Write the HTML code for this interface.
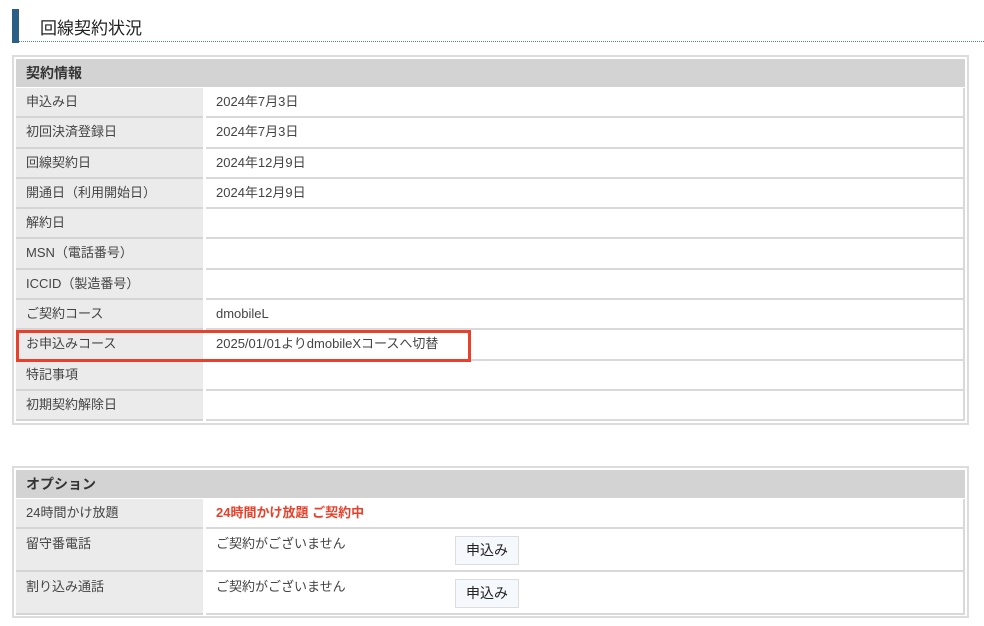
<!DOCTYPE html>
<html><head><meta charset="utf-8"><style>
*{margin:0;padding:0;box-sizing:border-box}
body{width:984px;height:626px;background:#fff;font-family:"Liberation Sans","Noto Sans CJK JP",sans-serif;color:#444;position:relative;overflow:hidden}
.bar{position:absolute;left:12px;top:9px;width:7px;height:34px;background:#2b5f86}
.title{position:absolute;left:40px;top:14px;font-size:17px;color:#222}
.dots{position:absolute;left:19px;top:41px;width:965px;border-top:1px dotted #5a7fa0}
.box{position:absolute;left:12px;width:957px;border:2px solid #dcdcdc;padding:2px}
.hd{height:28px;background:#d3d3d3;font-weight:bold;font-size:14px;line-height:28px;padding-left:10px;color:#333;margin-bottom:1px}
.row{display:flex;font-size:13px}
.l{width:187px;background:#ebebeb;border-bottom:2px solid #d4d4d4;padding-left:10px;margin-right:3px}
.v{flex:1;border-bottom:2px solid #d9d9d9;border-right:2px solid #d9d9d9;padding-left:10px}
.r1 .l,.r1 .v{height:30.3px;line-height:28.5px}
.red{color:#e8402a;font-weight:bold}
.btn{position:absolute;left:455px;width:64px;height:29px;background:#f5f8fc;border:1px solid #ddd;font-size:14px;line-height:27px;text-align:center;color:#222}
.hl{position:absolute;left:16px;top:330px;width:455px;height:32px;border:3px solid #e8402a}
</style></head><body>
<div class="bar"></div><div class="title">回線契約状況</div><div class="dots"></div>
<div class="box" style="top:55px;height:370px">
<div class="hd">契約情報</div>
<div class="row r1"><div class="l">申込み日</div><div class="v">2024年7月3日</div></div>
<div class="row r1"><div class="l">初回決済登録日</div><div class="v">2024年7月3日</div></div>
<div class="row r1"><div class="l">回線契約日</div><div class="v">2024年12月9日</div></div>
<div class="row r1"><div class="l">開通日（利用開始日）</div><div class="v">2024年12月9日</div></div>
<div class="row r1"><div class="l">解約日</div><div class="v"></div></div>
<div class="row r1"><div class="l">MSN（電話番号）</div><div class="v"></div></div>
<div class="row r1"><div class="l">ICCID（製造番号）</div><div class="v"></div></div>
<div class="row r1"><div class="l">ご契約コース</div><div class="v">dmobileL</div></div>
<div class="row r1"><div class="l">お申込みコース</div><div class="v">2025/01/01よりdmobileXコースへ切替</div></div>
<div class="row r1"><div class="l">特記事項</div><div class="v"></div></div>
<div class="row r1"><div class="l">初期契約解除日</div><div class="v"></div></div>
</div>
<div class="hl"></div>
<div class="box" style="top:466px;height:152px">
<div class="hd">オプション</div>
<div class="row r1"><div class="l">24時間かけ放題</div><div class="v red">24時間かけ放題 ご契約中</div></div>
<div class="row"><div class="l" style="height:43px;line-height:29px">留守番電話</div><div class="v" style="height:43px;line-height:29px">ご契約がございません</div></div>
<div class="row"><div class="l" style="height:43px;line-height:29px">割り込み通話</div><div class="v" style="height:43px;line-height:29px">ご契約がございません</div></div>
</div>
<div class="btn" style="top:536px">申込み</div>
<div class="btn" style="top:579px">申込み</div>
</body></html>
